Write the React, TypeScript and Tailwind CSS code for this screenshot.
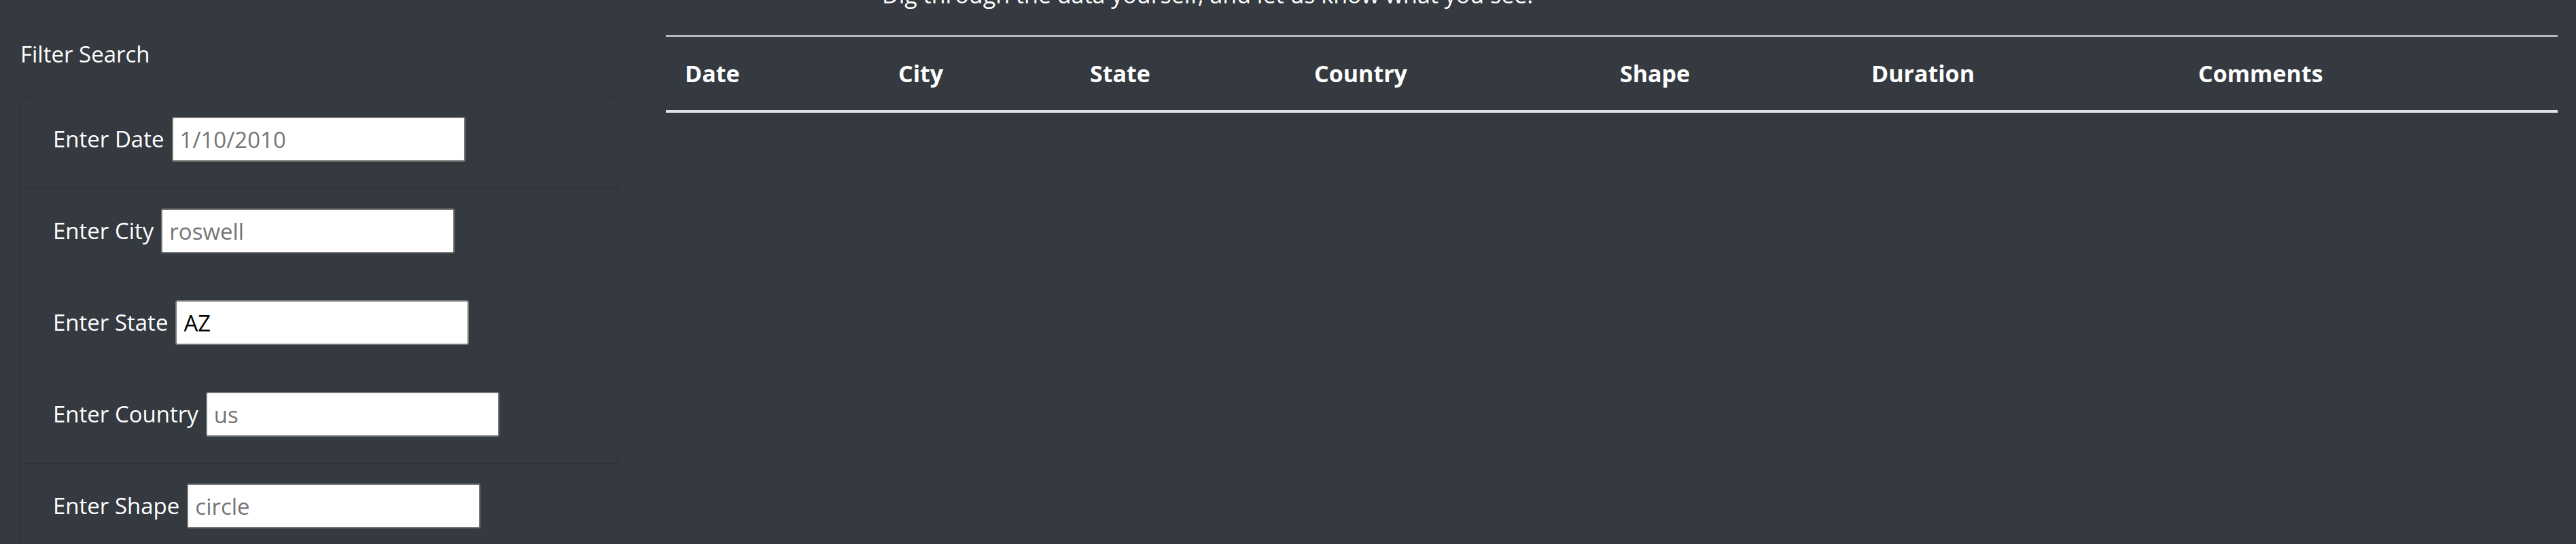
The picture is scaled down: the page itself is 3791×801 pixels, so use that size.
const filters = [
  { id: "datetime", label: "Enter Date", placeholder: "1/10/2010" },
  { id: "city", label: "Enter City", placeholder: "roswell" },
  { id: "state", label: "Enter State", value: "AZ" },
  { id: "country", label: "Enter Country", placeholder: "us" },
  { id: "shape", label: "Enter Shape", placeholder: "circle" },
]

const columns = ["Date", "City", "State", "Country", "Shape", "Duration", "Comments"]

export default function App() {
  return (
    <div
      className="min-h-screen bg-[#343a40] text-white overflow-hidden"
      style={{ fontFamily: '"Open Sans", "Noto Sans", sans-serif' }}
    >
      <div className="flex">
        {/* filters */}
        <div className="w-[881px] ml-[30px] shrink-0">
          <h5 className="text-[33px] leading-[46px] mt-[57px] mb-[39px]">Filter Search</h5>
          <ul className="border border-[#2e3338] rounded-[9px]">
            {filters.map((f, i) => (
              <li
                key={f.id}
                className={`flex items-center pl-[47px] pt-[29px] pb-[39px] ${i > 0 ? "border-t border-[#2e3338]" : ""}`}
              >
                <label htmlFor={f.id} className="text-[33px] mr-[11px]">
                  {f.label}
                </label>
                <input
                  id={f.id}
                  type="text"
                  placeholder={f.placeholder}
                  defaultValue={f.value}
                  className="w-[432px] h-[66px] bg-white text-black text-[33px] px-[10px] border-2 border-[#767676] rounded-[3px] placeholder:text-[#757575] outline-none"
                />
              </li>
            ))}
          </ul>
        </div>

        {/* results table */}
        <div className="ml-[69px] w-[2784px] shrink-0">
          <p className="text-[34px] leading-[46px] -mt-[31px] ml-[318px] mb-[37px]">
            Dig through the data yourself, and let us know what you see.
          </p>
          <div className="border-t-2 border-b-[4px] border-[#dee2e6] h-[114px] grid grid-cols-[314px_282px_330px_450px_370px_481px_557px] items-center">
            {columns.map((c) => (
              <div key={c} className="px-[28px] text-[34px] font-bold">
                {c}
              </div>
            ))}
          </div>
        </div>
      </div>
    </div>
  )
}
